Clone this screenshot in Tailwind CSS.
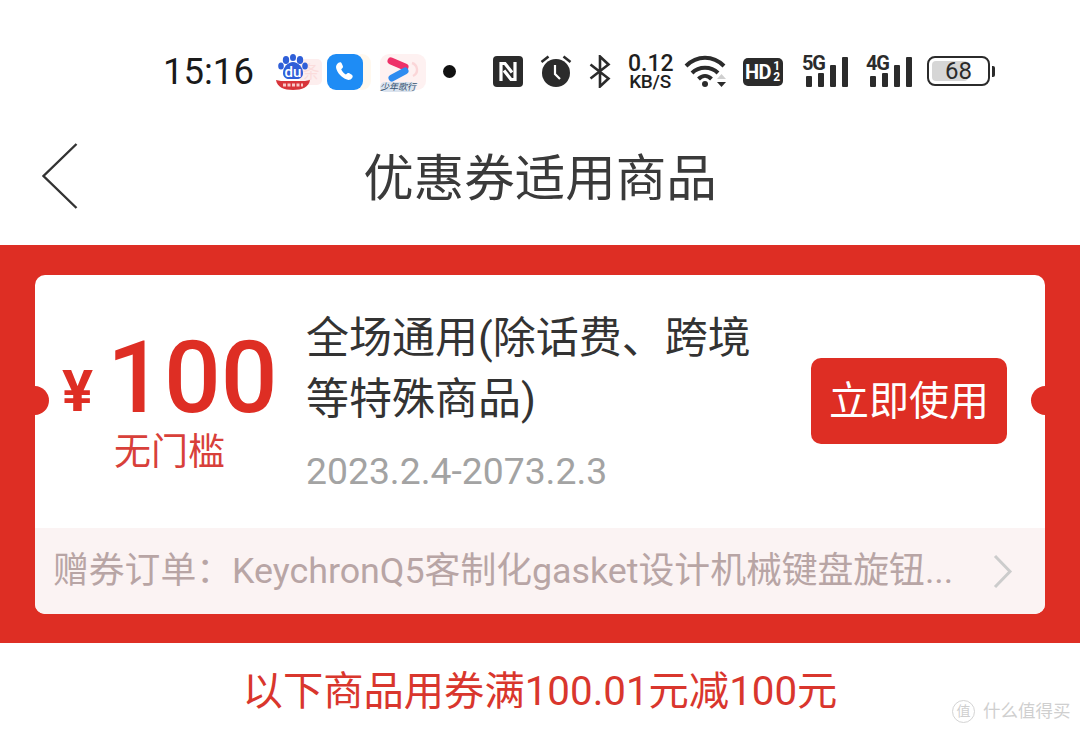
<!DOCTYPE html>
<html lang="zh">
<head>
<meta charset="utf-8">
<title>优惠券适用商品</title>
<script src="https://cdn.jsdelivr.net/npm/@tailwindcss/browser@4"></script>
</head>
<body class="bg-white">
<div class="w-[1080px] h-[734px] overflow-hidden flex flex-col bg-white font-['Roboto','Noto_Sans_CJK_SC',sans-serif]">

    <!-- status bar -->
    <div class="h-[120px] shrink-0 pt-[50px] pl-[163px] flex items-start">
        <div class="h-[44px] w-[88px] flex items-center text-[36.500px] leading-none text-[#1a1a1a]">15:16</div>

        <!-- baidu -->
        <div class="relative w-[36px] h-[40px] ml-[24px] mt-[3px]">
            <div class="absolute left-[25px] top-[6px] w-[22px] h-[26px] rounded-[5px] bg-[#fdeeee] text-[#fbdcdc] text-[17px] leading-[26px] text-center">条</div>
            <svg class="absolute inset-0" width="36" height="40" viewBox="0 0 36 40">
                <ellipse cx="11" cy="7" rx="3.200" ry="4" fill="#2f5fd8"/>
                <ellipse cx="18" cy="4.500" rx="3" ry="3.600" fill="#2f5fd8"/>
                <ellipse cx="25" cy="7" rx="3.200" ry="4" fill="#2f5fd8"/>
                <ellipse cx="6" cy="13" rx="2.800" ry="3.600" fill="#2f5fd8"/>
                <ellipse cx="30" cy="13" rx="2.800" ry="3.600" fill="#2f5fd8"/>
                <path d="M18 9c5 0 10 5 10 11 0 4-3 6-6 6h-8c-3 0-6-2-6-6 0-6 5-11 10-11z" fill="#2f5fd8"/>
                <path d="M1 27l5 1h24l5-1c-1 7-8 10-17 10S2 34 1 27z" fill="#d8343a"/>
                <path d="M8 32h20" stroke="#f7c9c9" stroke-width="3" stroke-dasharray="3 1.500"/>
            </svg>
            <div class="absolute left-0 w-[36px] top-[13px] text-center text-[15px] leading-[12px] font-medium text-white">du</div>
        </div>

        <!-- phone -->
        <div class="relative w-[36px] h-[36px] ml-[16px] mt-[4px]">
            <div class="absolute left-[26px] top-0 w-[18px] h-[36px] rounded-[9px] bg-[#fff8ee]"></div>
            <div class="absolute inset-0 rounded-[9px] bg-[#1e8cf5] flex items-center justify-center">
                <svg width="26" height="26" viewBox="0 0 24 24">
                    <path d="M6 3.500c1.200-.9 2.500-.6 3 .6l1 2.400c.3.8.1 1.500-.5 2l-1 .9c.8 2 2.300 3.800 4.300 4.900l1.200-1c.6-.5 1.400-.5 2-.1l2.300 1.400c1 .7 1.100 1.900.3 2.900-1.100 1.500-2.900 2.200-4.800 1.500C8.600 17 4.800 12.700 3.800 8.300 3.400 6.500 4.500 4.600 6 3.500z" fill="#fff"/>
                </svg>
            </div>
        </div>

        <!-- video app -->
        <div class="relative w-[46px] h-[36px] ml-[17px] mt-[4px] rounded-[9px] bg-[#fef1f1]">
            <svg class="absolute inset-0" width="46" height="36" viewBox="0 0 46 36">
                <path d="M11 7l14 6" stroke="#ee3168" stroke-width="7" stroke-linecap="round"/>
                <path d="M25 17l-13 7" stroke="#2f8cf0" stroke-width="7" stroke-linecap="round"/>
                <path d="M32 9c6 2 7 10 1 13" stroke="#fbd6d8" stroke-width="2.400" fill="none"/>
            </svg>
            <div class="absolute left-0 -bottom-[2px] w-[36px] rounded-full bg-[#dbe3ee] text-center text-[9px] leading-[10px] italic text-[#33506e]">少年歌行</div>
        </div>

        <div class="w-[13px] h-[13px] rounded-full bg-[#111] ml-[17px] mt-[15px]"></div>

        <!-- nfc -->
        <svg class="ml-[37px] mt-[6px]" width="30" height="31" viewBox="0 0 30 31">
            <rect width="30" height="31" rx="4" fill="#2b2b2b"/>
            <path d="M8 25V7.500h4l7 9" fill="none" stroke="#fff" stroke-width="3.200"/>
            <path d="M22 6v17.500h-4l-7-9" fill="none" stroke="#fff" stroke-width="3.200"/>
        </svg>

        <!-- alarm -->
        <svg class="ml-[17px] mt-[4px]" width="32" height="34" viewBox="0 0 32 34">
            <circle cx="16" cy="19" r="14" fill="#2b2b2b"/>
            <path d="M1.500 8l7-5.500M30.500 8l-7-5.500" stroke="#2b2b2b" stroke-width="2.600"/>
            <path d="M15 11v9l5 5" fill="none" stroke="#fff" stroke-width="2.200"/>
        </svg>

        <!-- bluetooth -->
        <svg class="ml-[17px] mt-[5px]" width="22" height="33" viewBox="0 0 22 33">
            <path d="M1.500 9.500l18 14-8.500 8V1.500l8.500 8-18 14" fill="none" stroke="#2b2b2b" stroke-width="2.600"/>
        </svg>

        <!-- net speed -->
        <div class="w-[44px] ml-[17px] mt-[5px] text-center text-[#1f1f1f] font-medium">
            <div class="text-[23px] h-[17px] leading-[17px]">0.12</div>
            <div class="text-[19px] h-[15px] leading-[15px] mt-[2px] tracking-[-0.3px]">KB/S</div>
        </div>

        <!-- wifi -->
        <svg class="ml-[12px] mt-[3px]" width="44" height="36" viewBox="0 0 44 36">
            <path d="M2 13c11-11 27-11 38 0" fill="none" stroke="#2b2b2b" stroke-width="4"/>
            <path d="M8 20c7-7 19-7 26 0" fill="none" stroke="#2b2b2b" stroke-width="4"/>
            <path d="M14.500 26c4-4 9-4 13 0" fill="none" stroke="#2b2b2b" stroke-width="4"/>
            <circle cx="21" cy="31" r="3" fill="#2b2b2b"/>
            <path d="M33 26l4.500-5 4.500 5z" fill="#cfcfcf"/>
            <path d="M33 29h9l-4.500 5z" fill="#2b2b2b"/>
        </svg>

        <!-- hd badge -->
        <div class="w-[40px] h-[28px] ml-[15px] mt-[8px] rounded-[5px] bg-[#2b2b2b] text-white font-bold flex items-center pl-[2px]">
            <span class="text-[20px] leading-none tracking-[-0.5px]">HD</span>
            <span class="flex flex-col text-[12px] leading-[11px] ml-[2px]"><span>1</span><span>2</span></span>
        </div>

        <!-- 5g -->
        <div class="relative w-[46px] h-[34px] ml-[19px] mt-[3px]">
            <div class="absolute left-0 top-0 text-[20px] leading-[20px] font-bold text-[#2b2b2b] tracking-[-1.200px]">5G</div>
            <div class="absolute inset-0 flex items-end justify-end gap-[6px]">
                <div class="w-[6px] h-[11px] bg-[#2b2b2b] rounded-[1px]"></div>
                <div class="w-[6px] h-[14px] bg-[#2b2b2b] rounded-[1px]"></div>
                <div class="w-[6px] h-[22px] bg-[#2b2b2b] rounded-[1px]"></div>
                <div class="w-[6px] h-[30px] bg-[#2b2b2b] rounded-[1px]"></div>
            </div>
        </div>

        <!-- 4g -->
        <div class="relative w-[46px] h-[34px] ml-[18px] mt-[3px]">
            <div class="absolute left-0 top-0 text-[20px] leading-[20px] font-bold text-[#2b2b2b] tracking-[-1.200px]">4G</div>
            <div class="absolute inset-0 flex items-end justify-end gap-[6px]">
                <div class="w-[6px] h-[11px] bg-[#2b2b2b] rounded-[1px]"></div>
                <div class="w-[6px] h-[14px] bg-[#2b2b2b] rounded-[1px]"></div>
                <div class="w-[6px] h-[22px] bg-[#2b2b2b] rounded-[1px]"></div>
                <div class="w-[6px] h-[30px] bg-[#2b2b2b] rounded-[1px]"></div>
            </div>
        </div>

        <!-- battery -->
        <div class="ml-[15px] mt-[6px] flex items-center">
            <div class="relative w-[63px] h-[30px] rounded-[8px] border-[2px] border-[#2b2b2b] p-[3px]">
                <div class="w-[68%] h-full rounded-[4px] bg-[#d6d6d6]"></div>
                <div class="absolute inset-0 flex items-center justify-center text-[24px] leading-none text-[#2b2b2b]">68</div>
            </div>
            <div class="w-[3px] h-[11px] ml-[2px] bg-[#2b2b2b] rounded-r-[2px]"></div>
        </div>
    </div>

    <!-- nav -->
    <div class="h-[125px] shrink-0 relative flex items-center justify-center pb-[7px]">
        <svg class="absolute left-[41px] top-[22px]" width="38" height="68" viewBox="0 0 38 68">
            <path d="M35.500 2L2.500 34l33 32" fill="none" stroke="#333" stroke-width="2.400"/>
        </svg>
        <h1 class="text-[50.500px] leading-none font-normal text-[#3a3a3a]">优惠券适用商品</h1>
    </div>

    <!-- coupon -->
    <div class="h-[398px] shrink-0 bg-[#de2e24] pt-[30px] px-[35px]">
        <div class="relative h-[339px] rounded-[10px] bg-white overflow-hidden flex flex-col">
            <div class="absolute -left-[15px] top-[111px] w-[29px] h-[29px] rounded-full bg-[#de2e24]"></div>
            <div class="absolute -right-[15px] top-[111px] w-[29px] h-[29px] rounded-full bg-[#de2e24]"></div>

            <div class="h-[253px] flex items-start">
                <div class="w-[271px] shrink-0 pl-[27px] pt-[58px]">
                    <div class="h-[92px] flex items-end">
                        <span class="text-[58px] h-[58px] leading-[58px] font-bold text-[#de2e24] mb-[5px]">¥</span>
                        <span class="text-[100px] h-[80px] leading-[80px] font-medium text-[#de2e24] ml-[14px] mb-[7px]">100</span>
                    </div>
                    <div class="w-[215px] text-center text-[37px] leading-[44px] text-[#d8403a] mt-[6px]">无门槛</div>
                </div>
                <div class="w-[505px] shrink-0 pt-[33px]">
                    <div class="text-[43px] leading-[61px] text-[#333]">全场通用(除话费、跨境<br>等特殊商品)</div>
                    <div class="text-[37.300px] leading-[40px] mt-[21px] text-[#a3a3a3]">2023.2.4-2073.2.3</div>
                </div>
                <button class="w-[196px] h-[86px] mt-[83px] rounded-[10px] bg-[#de2e24] text-white text-[40px] leading-none pt-[2px]">立即使用</button>
            </div>

            <div class="flex-1 bg-[#fbf3f3] flex items-center pl-[18px] pr-[32px]">
                <span class="flex-1 text-[35.800px] leading-[46px] text-[#b8a5a5] whitespace-nowrap">赠券订单：KeychronQ5客制化gasket设计机械键盘旋钮...</span>
                <svg class="shrink-0" width="20" height="35" viewBox="0 0 20 35">
                    <path d="M2 2l15 15.500L2 33" fill="none" stroke="#cccccc" stroke-width="3"/>
                </svg>
            </div>
        </div>
    </div>

    <!-- hint -->
    <div class="relative flex-1 flex items-center justify-center pt-[8px] text-[40.300px] leading-none text-[#d9362d]">
        以下商品用券满100.01元减100元
        <div class="absolute left-[952px] top-[57px] flex items-center gap-[8px] text-[#cfcfcf]">
            <div class="w-[23px] h-[23px] rounded-full border border-[#d4d4d4] text-[14px] leading-[21px] text-center">值</div>
            <span class="text-[17.500px] leading-none">什么值得买</span>
        </div>
    </div>
</div>
</body>
</html>
